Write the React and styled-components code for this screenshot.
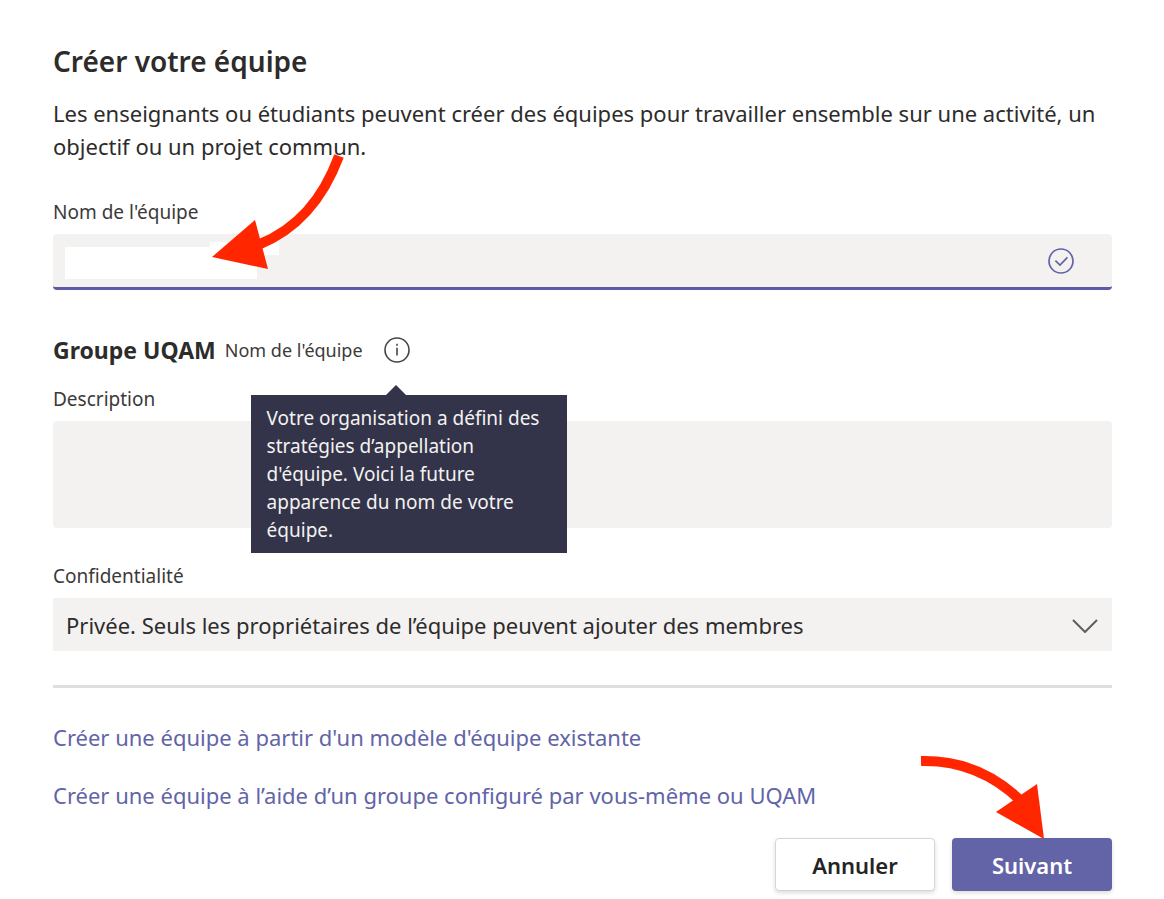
import React, { useState } from "react";
import styled, { createGlobalStyle } from "styled-components";

const App = () => {
  const [name, setName] = useState("");
  const [description, setDescription] = useState("");

  return (
    <>
      <GlobalStyle />
      <Dialog>
        <Title>Créer votre équipe</Title>
        <Intro>
          Les enseignants ou étudiants peuvent créer des équipes pour travailler
          ensemble sur une activité, un objectif ou un projet commun.
        </Intro>

        <Label htmlFor="team-name">Nom de l'équipe</Label>
        <NameField>
          <NameInput
            id="team-name"
            type="text"
            value={name}
            onChange={(e) => setName(e.target.value)}
          />
          <MaskLarge />
          <MaskSmall />
          <CheckIcon viewBox="0 0 26 26" aria-hidden="true">
            <circle cx="13" cy="13" r="12" />
            <path d="M7.4 12.6 12 17 19.4 9.4" />
          </CheckIcon>
          <NameArrow viewBox="0 0 140 120" aria-hidden="true">
            <path d="M131 4C115 47 90 77 50 93" />
            <polygon points="4,105 47,68 60,117" />
          </NameArrow>
        </NameField>

        <Preview>
          <Prefix>Groupe UQAM</Prefix>
          <PreviewName>Nom de l'équipe</PreviewName>
          <InfoButton
            type="button"
            aria-label="Information"
            aria-describedby="naming-tip"
          >
            <svg viewBox="0 0 26 26" aria-hidden="true">
              <circle cx="13" cy="13" r="12" />
              <path d="M13 10.8V18.6M13 6.8V8.8" />
            </svg>
            <Tooltip id="naming-tip" role="tooltip">
              Votre organisation a défini des stratégies d’appellation d'équipe.
              Voici la future apparence du nom de votre équipe.
            </Tooltip>
          </InfoButton>
        </Preview>

        <Label htmlFor="team-description">Description</Label>
        <Description
          id="team-description"
          value={description}
          onChange={(e) => setDescription(e.target.value)}
        />

        <Label htmlFor="team-privacy">Confidentialité</Label>
        <SelectField>
          <Select id="team-privacy" defaultValue="private">
            <option value="private">
              Privée. Seuls les propriétaires de l’équipe peuvent ajouter des
              membres
            </option>
          </Select>
          <Chevron viewBox="0 0 26 14" aria-hidden="true">
            <path d="M1 1 13 13 25 1" />
          </Chevron>
        </SelectField>

        <Divider />

        <Links>
          <Link href="#modele">
            Créer une équipe à partir d'un modèle d'équipe existante
          </Link>
          <Link href="#groupe">
            Créer une équipe à l’aide d’un groupe configuré par vous-même ou
            UQAM
          </Link>
        </Links>

        <Actions>
          <Button type="button">Annuler</Button>
          <Button type="button" $primary>
            Suivant
          </Button>
          <NextArrow viewBox="0 0 130 90" aria-hidden="true">
            <path d="M3 9C46 8 77 24 102 48" />
            <polygon points="119,32 126,87 78,60" />
          </NextArrow>
        </Actions>
      </Dialog>
    </>
  );
};

const GlobalStyle = createGlobalStyle`
  * {
    box-sizing: border-box;
  }
  body {
    margin: 0;
    background: #fff;
    color: #2d2c2b;
    font-family: "Noto Sans", "Open Sans", sans-serif;
  }
  button, input, textarea, select {
    font-family: inherit;
    color: inherit;
  }
`;

const Dialog = styled.main`
  display: flex;
  flex-direction: column;
  padding: 41px 52px 8px 53px;
`;

const Title = styled.h1`
  margin: 0;
  font-size: 28px;
  line-height: 40px;
  font-weight: 600;
`;

const Intro = styled.p`
  margin: 16px 0 37px;
  font-size: 22px;
  line-height: 33px;
`;

const Label = styled.label`
  margin-bottom: 10px;
  font-size: 19px;
  line-height: 24px;
  color: #3b3a39;
`;

const NameField = styled.div`
  position: relative;
`;

const NameInput = styled.input`
  display: block;
  width: 100%;
  height: 56px;
  padding: 0 80px 0 13px;
  border: 0;
  border-bottom: 3px solid #5c5ba8;
  border-radius: 4px;
  background: #f3f2f1;
  font-size: 22px;
  outline: none;
`;

const MaskLarge = styled.span`
  position: absolute;
  top: 13px;
  left: 12px;
  width: 192px;
  height: 32px;
  background: #fff;
`;

const MaskSmall = styled(MaskLarge)`
  top: 8px;
  left: 157px;
  width: 69px;
  height: 13px;
`;

const CheckIcon = styled.svg`
  position: absolute;
  top: 14px;
  right: 38px;
  width: 26px;
  height: 26px;
  fill: none;
  stroke: #6264a7;
  stroke-width: 1.7;
`;

const Arrow = styled.svg`
  position: absolute;
  z-index: 2;
  pointer-events: none;

  path {
    fill: none;
    stroke: #ff2600;
    stroke-width: 10;
  }
  polygon {
    fill: #ff2600;
  }
`;

const NameArrow = styled(Arrow)`
  top: -82px;
  left: 155px;
  width: 140px;
  height: 120px;
`;

const Preview = styled.div`
  display: flex;
  align-items: center;
  margin: 44px 0 21px;
  line-height: 32px;
`;

const Prefix = styled.strong`
  margin-right: 9px;
  font-size: 23px;
  font-weight: 700;
`;

const PreviewName = styled.span`
  margin-right: 21px;
  font-size: 18px;
  color: #3b3a39;
`;

const InfoButton = styled.button`
  position: relative;
  width: 26px;
  height: 26px;
  padding: 0;
  border: 0;
  background: none;

  svg {
    display: block;
    fill: none;
    stroke: #484644;
    stroke-width: 1.6;
  }
`;

const Tooltip = styled.span`
  position: absolute;
  z-index: 1;
  top: 58px;
  left: -133px;
  width: 316px;
  padding: 9px 16px;
  background: #33344a;
  color: #f3f2f1;
  font-size: 19px;
  line-height: 28px;
  text-align: left;

  &::before {
    content: "";
    position: absolute;
    bottom: 100%;
    left: 135px;
    border: 10px solid transparent;
    border-top: 0;
    border-bottom-color: #33344a;
  }
`;

const Description = styled.textarea`
  height: 107px;
  margin-bottom: 36px;
  padding: 10px 13px;
  border: 0;
  border-radius: 4px;
  background: #f3f2f1;
  font-size: 22px;
  resize: none;
`;

const SelectField = styled.div`
  position: relative;
`;

const Select = styled.select`
  display: block;
  width: 100%;
  height: 53px;
  padding: 0 60px 0 13px;
  border: 0;
  border-radius: 0;
  background: #f3f2f1;
  font-size: 22px;
  appearance: none;
`;

const Chevron = styled.svg`
  position: absolute;
  top: 21px;
  right: 14px;
  width: 26px;
  height: 14px;
  fill: none;
  stroke: #605e5c;
  stroke-width: 2;
  pointer-events: none;
`;

const Divider = styled.hr`
  width: 100%;
  height: 3px;
  margin: 34px 0 33px;
  border: 0;
  background: #e1dfdd;
`;

const Links = styled.nav`
  display: flex;
  flex-direction: column;
  align-items: flex-start;
  gap: 25px;
`;

const Link = styled.a`
  color: #6264a7;
  font-size: 22px;
  line-height: 33px;
  text-decoration: none;
`;

const Actions = styled.div`
  position: relative;
  display: flex;
  justify-content: flex-end;
  gap: 17px;
  margin-top: 26px;
`;

const Button = styled.button`
  width: 160px;
  height: 53px;
  padding: 0;
  border: ${({ $primary }) => ($primary ? "0" : "1px solid #d8d6d4")};
  border-radius: 4px;
  background: ${({ $primary }) => ($primary ? "#6264a7" : "#fff")};
  color: ${({ $primary }) => ($primary ? "#fff" : "#252423")};
  box-shadow: 0 2px 4px rgba(0, 0, 0, 0.14);
  font-size: 22px;
  font-weight: 600;
`;

const NextArrow = styled(Arrow)`
  top: -86px;
  right: 64px;
  width: 130px;
  height: 90px;
`;

export default App;
